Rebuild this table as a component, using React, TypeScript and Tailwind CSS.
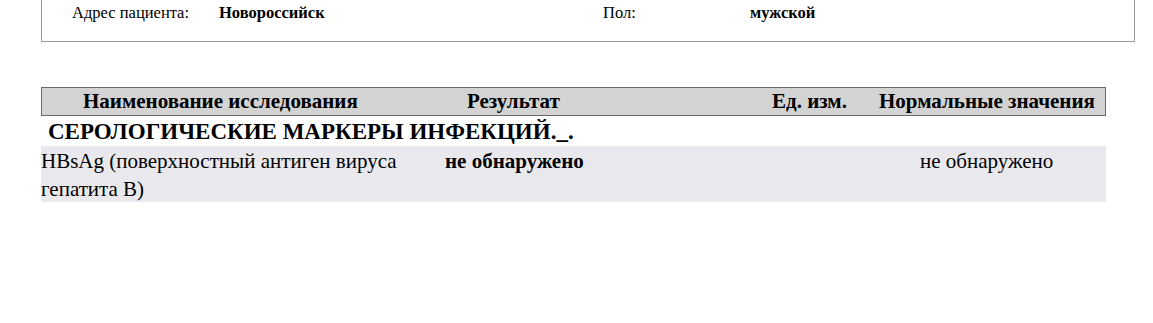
export default function App() {
  const serif = { fontFamily: '"Liberation Serif", "Times New Roman", serif' };
  return (
    <div className="w-[1153px] h-[323px] bg-white text-black" style={serif}>
      <div className="ml-[41px] w-[1094px] h-[42px] border-x border-b border-[#9a9a9a] flex items-center text-[16.5px] leading-none pb-[14px]">
        <span className="ml-[30px] w-[147px]">Адрес пациента:</span>
        <span className="font-bold w-[384px]">Новороссийск</span>
        <span className="w-[147px]">Пол:</span>
        <span className="font-bold">мужской</span>
      </div>
      <div className="ml-[41px] w-[1065px] mt-[45px]">
        <div className="flex h-[29px] items-center bg-[#d3d3d3] border border-[#6a6a6a] font-bold text-[21px] leading-none">
          <div className="w-[403px] pl-[41px]">Наименование исследования</div>
          <div className="w-[315px] pl-[22px]">Результат</div>
          <div className="w-[110px] pl-[12px]">Ед. изм.</div>
          <div className="flex-1 pl-[9px] whitespace-nowrap">Нормальные значения</div>
        </div>
        <div className="h-[30px] flex items-center pl-[7px] font-bold text-[23px] leading-none">
          СЕРОЛОГИЧЕСКИЕ МАРКЕРЫ ИНФЕКЦИЙ._.
        </div>
        <div className="flex bg-[#e9e9ed] text-[21px] leading-[28px] pt-[1px] h-[56px]">
          <div className="w-[404px]">HBsAg (поверхностный антиген вируса гепатита В)</div>
          <div className="w-[315px] font-bold">не обнаружено</div>
          <div className="w-[110px]"></div>
          <div className="flex-1 pl-[50px]">не обнаружено</div>
        </div>
      </div>
    </div>
  );
}
